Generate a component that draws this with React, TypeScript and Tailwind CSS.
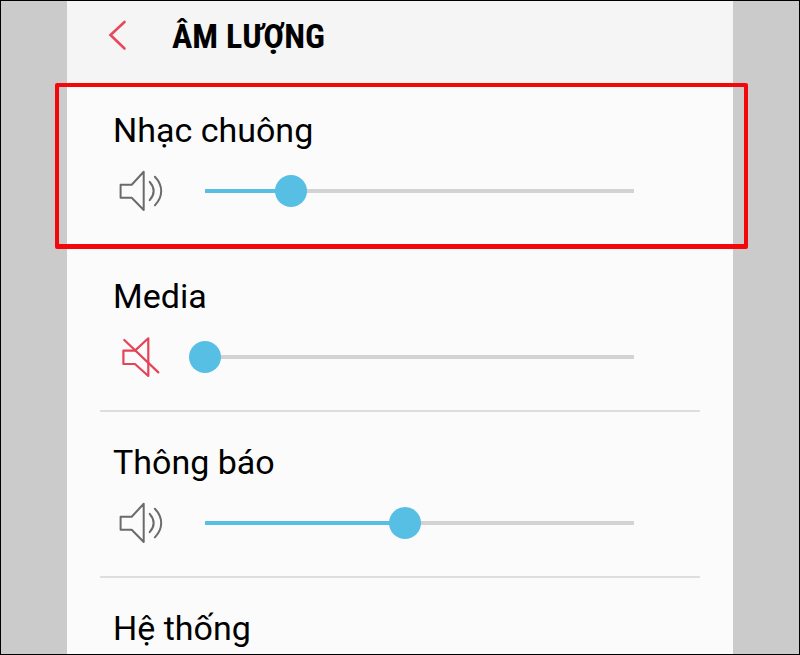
import React, { useId, useState } from 'react';

const MAX_LEVEL = 15;

interface VolumeRowProps {
    label: string;
    initial?: number;
    highlighted?: boolean;
}

const SpeakerIcon: React.FC = () => (
    <svg viewBox="0 0 48 48" className="size-12 shrink-0" fill="none" stroke="#6b6b6b" strokeWidth="2" strokeLinejoin="round" strokeLinecap="round" aria-hidden="true">
        <path d="M3.6 17.7H14.7L26.7 4.8V43L14.7 30.8H3.6Z" />
        <path d="M32.7 14.8Q40.6 24 32.7 33.2" />
        <path d="M37.9 9.8C46.3 18.6 46.3 29.6 37.9 38.4" />
    </svg>
);

const MutedIcon: React.FC = () => (
    <svg viewBox="0 0 48 48" className="size-12 shrink-0" fill="none" stroke="#e44458" strokeWidth="2.2" strokeLinejoin="round" strokeLinecap="round" aria-hidden="true">
        <path d="M6.4 17.6H18L31.3 5.3V43L18 31H6.4Z" />
        <path d="M7.3 7L41.3 39.4" />
    </svg>
);

const VolumeRow: React.FC<VolumeRowProps> = ({ label, initial, highlighted }) => {
    const id = useId();
    const [level, setLevel] = useState(initial ?? 0);
    const style = { '--level': level / MAX_LEVEL } as React.CSSProperties;

    return (
        <li className="group relative px-[33px]">
            <div className="border-[#dedede] pt-[25px] pb-[29px] group-not-first:border-t-2 group-not-first:pt-[29px] group-last:pb-0">
                <label htmlFor={id} className="block pl-[13px] text-[34px] leading-[42px]">
                    {label}
                </label>
                {initial !== undefined && (
                    <div className="mt-4 flex items-center gap-6 pl-[17px] pr-[50px]">
                        {level === 0 ? <MutedIcon /> : <SpeakerIcon />}
                        <input
                            id={id}
                            type="range"
                            min={0}
                            max={MAX_LEVEL}
                            value={level}
                            onChange={(e) => setLevel(Number(e.target.value))}
                            style={style}
                            className="h-8 min-w-0 flex-1 cursor-pointer appearance-none bg-[linear-gradient(to_right,transparent_16px,#57bfe3_16px,#57bfe3_calc(16px+(100%-32px)*var(--level)),#d3d3d3_calc(16px+(100%-32px)*var(--level)),#d3d3d3_calc(100%-16px),transparent_calc(100%-16px))] bg-[length:100%_4px] bg-center bg-no-repeat [&::-webkit-slider-thumb]:size-8 [&::-webkit-slider-thumb]:appearance-none [&::-webkit-slider-thumb]:rounded-full [&::-webkit-slider-thumb]:bg-[#57bfe3]"
                        />
                    </div>
                )}
            </div>
            {/* Callout frame, wider than the screen */}
            {highlighted && (
                <div className="pointer-events-none absolute -top-px -right-[15px] -bottom-[5px] -left-3 z-10 rounded-xs border-4 border-b-5 border-[#f4070b]" />
            )}
        </li>
    );
};

export default function App() {
    return (
        <div className="flex min-h-screen border border-black bg-[#cbcbcb] px-[66px] font-['Roboto',sans-serif] text-black">
            <main className="flex-1 bg-[#fbfbfb]">
                <header className="flex h-[83px] items-start gap-[38px] bg-[#f5f5f5] pt-[14px] pl-[37px]">
                    <button type="button" aria-label="Quay lại" className="flex h-10 w-[30px] items-center">
                        <svg viewBox="0 0 30 40" className="h-10 w-[30px]" fill="none" stroke="#e8485c" strokeWidth="2.6" strokeLinecap="round" aria-hidden="true">
                            <path d="M20.5 7L6.5 20L20.5 33.5" />
                        </svg>
                    </button>
                    <h1 className="font-['Roboto_Condensed','Liberation_Sans_Narrow','Roboto',sans-serif] text-[34px] leading-[42px] font-bold">
                        ÂM LƯỢNG
                    </h1>
                </header>
                <ul>
                    <VolumeRow label="Nhạc chuông" initial={3} highlighted />
                    <VolumeRow label="Media" initial={0} />
                    <VolumeRow label="Thông báo" initial={7} />
                    <VolumeRow label="Hệ thống" />
                </ul>
            </main>
        </div>
    );
}
